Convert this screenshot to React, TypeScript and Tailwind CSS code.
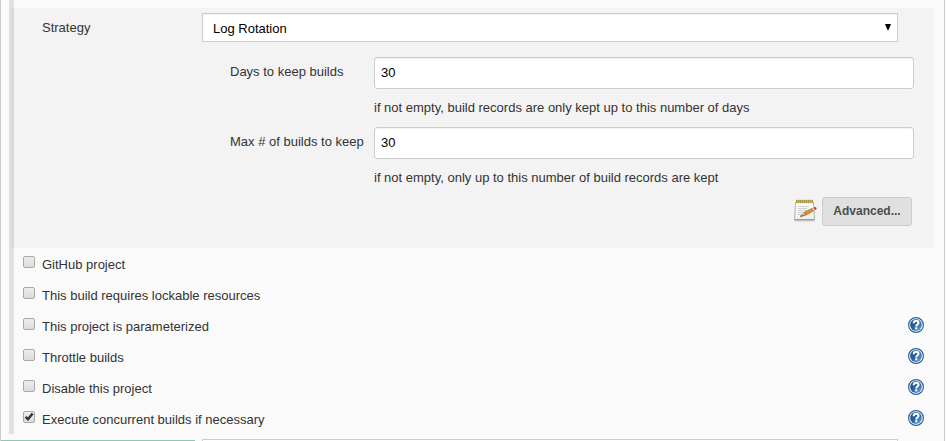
import React from "react";

function HelpIcon() {
  return (
    <svg width="16" height="16" viewBox="0 0 16 16" className="block shrink-0">
      <defs>
        <linearGradient id="helpFill" x1="0" y1="0" x2="1" y2="1">
          <stop offset="0" stopColor="#174a80" />
          <stop offset="0.5" stopColor="#2a649b" />
          <stop offset="1" stopColor="#78add8" />
        </linearGradient>
      </defs>
      <circle cx="8" cy="8" r="7.4" fill="#fff" stroke="#2c659c" strokeWidth="1.2" />
      <circle cx="8" cy="8" r="5.9" fill="url(#helpFill)" />
      <path d="M5.7 6.2C5.7 4.5 6.8 3.8 8.1 3.8c1.4 0 2.4.8 2.4 2 0 1.8-2.3 1.7-2.3 3.7" fill="none" stroke="#fff" strokeWidth="2.1" />
      <rect x="7.1" y="10.3" width="2.2" height="2" fill="#fff" />
    </svg>
  );
}

function NotepadIcon() {
  return (
    <svg width="24" height="24" viewBox="0 0 24 24" className="block shrink-0">
      <defs>
        <linearGradient id="paper" x1="0" y1="0" x2="0" y2="1">
          <stop offset="0" stopColor="#ffffff" />
          <stop offset="1" stopColor="#ececec" />
        </linearGradient>
      </defs>
      <path d="M1.5 22.5h20v1h-20z" fill="#d5d5d5" />
      <path d="M2.5 4.5h18l1 17.5h-20z" fill="url(#paper)" stroke="#b2b2ae" strokeWidth="1" />
      <path d="M1.5 21.7h20" stroke="#999" strokeWidth="1.2" />
      <rect x="3" y="2" width="17" height="3" fill="#c9b45c" />
      <path d="M3.5 1.7v3.6M5.5 1.7v3.6M7.5 1.7v3.6M9.5 1.7v3.6M11.5 1.7v3.6M13.5 1.7v3.6M15.5 1.7v3.6M17.5 1.7v3.6M19.5 1.7v3.6" stroke="#a38e3c" strokeWidth="0.8" />
      <path d="M5 8.5h11M5 10.5h9M5 12.5h9M5 14.5h5M5 16.5h3" stroke="#cfcfcf" strokeWidth="1" />
      <path d="M7.5 18.3l4-1.2" stroke="#666" strokeWidth="1.4" />
      <path d="M7.5 18.2l4-3.9 1.6 2.7z" fill="#e9c898" stroke="#6f5030" strokeWidth="0.6" />
      <path d="M11.5 14.2l7.7-3.9 1.5 2.5-7.7 4.2z" fill="#dc922e" stroke="#935b18" strokeWidth="0.6" />
      <path d="M19 10.3l1.9-1 1.4 2.6-1.8 1z" fill="#c8c8c8" />
      <path d="M20.6 9.5l1.6-.6q1.8.4 1.3 2.1l-1.5.9z" fill="#dc2828" />
    </svg>
  );
}

function Checkbox({ checked = false }: { checked?: boolean }) {
  return (
    <span className="mt-px flex h-3 w-3 shrink-0 rounded-[2px] border border-[#a9a9a9] bg-gradient-to-b from-[#ededed] to-[#dcdcdc]">
      {checked && (
        <svg width="10" height="10" viewBox="0 0 10 10" className="block">
          <path d="M1.6 4.9L4 7.2 8.6 1.5" fill="none" stroke="#333" strokeWidth="2.4" />
        </svg>
      )}
    </span>
  );
}

const options = [
  { label: "GitHub project" },
  { label: "This build requires lockable resources" },
  { label: "This project is parameterized", help: true },
  { label: "Throttle builds", help: true },
  { label: "Disable this project", help: true },
  { label: "Execute concurrent builds if necessary", help: true, checked: true },
];

function Field({ label, value, hint }: { label: string; value: string; hint: string }) {
  return (
    <div className="flex h-[70px] pl-[216px]">
      <div className="w-36 shrink-0 pt-[5px]">{label}</div>
      <div>
        <div className="flex h-8 w-[540px] rounded-[3px] border border-[#ccc] bg-white pl-1.5 pt-[5px] text-black shadow-[inset_0_1px_1px_rgba(0,0,0,0.06)]">
          {value}
        </div>
        <div className="mt-[9px]">{hint}</div>
      </div>
    </div>
  );
}

export default function App() {
  return (
    <div className="flex h-[441px] w-[946px] overflow-hidden bg-[#fafafa] font-['Liberation_Sans',Arial,sans-serif] text-[13px] leading-[19px] whitespace-nowrap text-[#333]">
      <div className="flex w-[945px] shrink-0 flex-col border-x border-[#ccc]">
        <div className="ml-2 h-[434px] shrink-0 border-l-[5px] border-[#e0e0e0] pt-2">
          <div className="-ml-[3px] h-60 w-[923px] border-l-[3px] border-[#d9d9d9] bg-[#f3f3f3] pt-[5px]">
            <div className="flex h-11 pl-7">
              <div className="w-40 shrink-0 pt-[5px]">Strategy</div>
              <div className="flex h-[29px] w-[696px] justify-between border border-[#ccc] bg-white pl-2.5 pt-[5px] text-black shadow-[inset_0_1px_1px_rgba(0,0,0,0.06)]">
                <span>Log Rotation</span>
                <svg width="6" height="6" viewBox="0 0 6 6" className="mt-[5px] mr-[6px]">
                  <path d="M0 0h6L3.5 6h-1z" fill="#000" />
                </svg>
              </div>
            </div>
            <Field label="Days to keep builds" value="30" hint="if not empty, build records are only kept up to this number of days" />
            <Field label="Max # of builds to keep" value="30" hint="if not empty, only up to this number of build records are kept" />
            <div className="flex justify-end pr-[22px]">
              <div className="mr-[5px] pt-px"><NotepadIcon /></div>
              <button className="h-[29px] w-[90px] rounded-[3px] border border-[#ccc] bg-[#e0e0e0] text-[12px] leading-[27px] font-bold text-[#4d4d4d]">
                Advanced...
              </button>
            </div>
          </div>
          <div className="pt-[7px]">
            {options.map((o) => (
              <div key={o.label} className="flex h-[31px] pl-[9px] pr-5">
                <Checkbox checked={o.checked} />
                <span className="ml-[7px] grow">{o.label}</span>
                {o.help && <HelpIcon />}
              </div>
            ))}
          </div>
        </div>
        <div className="flex h-[7px] shrink-0 items-end">
          <div className="h-px w-[194px] bg-[#8fc9b4]" />
          <div className="ml-[7px] h-[2px] w-[696px] border-x border-t border-[#ccc] bg-white" />
        </div>
      </div>
    </div>
  );
}
